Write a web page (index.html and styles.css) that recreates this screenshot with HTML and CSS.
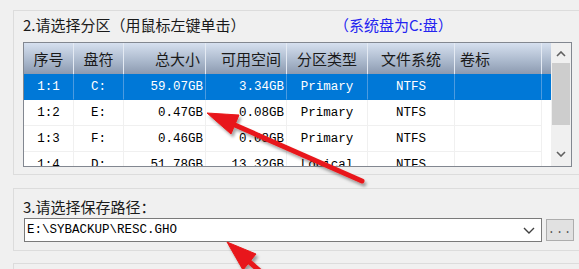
FILE: index.html
```html
<!DOCTYPE html>
<html lang="zh-CN">
<head>
    <meta charset="UTF-8">
    <meta name="viewport" content="width=device-width, initial-scale=1.0">
    <title>一键备份 - 选择分区</title>
    <link rel="stylesheet" href="styles.css">
</head>
<body>

<div class="page">
    <!-- 分区列表 -->
    <section class="group group-part">
        <div class="group-title">
            <span>2.请选择分区（用鼠标左键单击）</span>
            <span class="sys-note">（系统盘为C:盘）</span>
        </div>

        <div class="listview">
            <div class="list-main">
                <div class="row head">
                    <div class="c">序号</div>
                    <div class="c">盘符</div>
                    <div class="r">总大小</div>
                    <div class="r">可用空间</div>
                    <div class="c">分区类型</div>
                    <div class="c">文件系统</div>
                    <div class="l">卷标</div>
                    <div class="fill"></div>
                </div>

                <div class="row sel">
                    <div class="c">1:1</div>
                    <div class="c">C:</div>
                    <div class="r">59.07GB</div>
                    <div class="r">3.34GB</div>
                    <div class="c">Primary</div>
                    <div class="c">NTFS</div>
                    <div class="l"></div>
                </div>
                <div class="row">
                    <div class="c">1:2</div>
                    <div class="c">E:</div>
                    <div class="r">0.47GB</div>
                    <div class="r">0.08GB</div>
                    <div class="c">Primary</div>
                    <div class="c">NTFS</div>
                    <div class="l"></div>
                </div>
                <div class="row">
                    <div class="c">1:3</div>
                    <div class="c">F:</div>
                    <div class="r">0.46GB</div>
                    <div class="r">0.08GB</div>
                    <div class="c">Primary</div>
                    <div class="c">NTFS</div>
                    <div class="l"></div>
                </div>
                <div class="row">
                    <div class="c">1:4</div>
                    <div class="c">D:</div>
                    <div class="r">51.78GB</div>
                    <div class="r">13.32GB</div>
                    <div class="c">Logical</div>
                    <div class="c">NTFS</div>
                    <div class="l"></div>
                </div>
            </div>

            <div class="vscroll">
                <svg class="sb-arrow" width="10" height="6" viewBox="0 0 10 6"><path d="M1 5 L5 1 L9 5" fill="none" stroke="#606060" stroke-width="1.6"/></svg>
                <div class="thumb"></div>
                <svg class="sb-arrow down" width="10" height="6" viewBox="0 0 10 6"><path d="M1 1 L5 5 L9 1" fill="none" stroke="#606060" stroke-width="1.6"/></svg>
            </div>
        </div>
    </section>

    <!-- 保存路径 -->
    <section class="group group-path">
        <div class="group-title">
            <span>3.请选择保存路径：</span>
        </div>
        <div class="path-line">
            <div class="combo">
                <span class="combo-text">E:\SYBACKUP\RESC.GHO</span>
                <svg width="12" height="7" viewBox="0 0 12 7"><path d="M1 1 L6 6 L11 1" fill="none" stroke="#404040" stroke-width="1.4"/></svg>
            </div>
            <button class="browse">...</button>
        </div>
    </section>

    <section class="group group-next"></section>
</div>

<!-- 标注箭头 -->
<svg class="marks" width="579" height="269" viewBox="0 0 579 269">
    <defs>
        <filter id="shade" x="-20%" y="-20%" width="140%" height="140%">
            <feDropShadow dx="2" dy="3" stdDeviation="1.6" flood-color="#000" flood-opacity="0.35"/>
        </filter>
    </defs>
    <g filter="url(#shade)" fill="#e8191a" stroke="#e8191a">
        <line x1="362" y1="181" x2="228" y2="122" stroke-width="5" stroke-linecap="round"/>
        <polygon points="207,113 239,115 231,134" stroke-width="1" stroke-linejoin="round"/>
        <line x1="300" y1="306" x2="246" y2="259" stroke-width="5"/>
        <polygon points="227,242 256,254 243,270" stroke-width="1" stroke-linejoin="round"/>
    </g>
</svg>

</body>
</html>
```

FILE: styles.css
```css
* {
    margin: 0;
    padding: 0;
    box-sizing: border-box;
}

body {
    background-color: #f0f0f0;
    font-family: "Noto Sans CJK SC", "Noto Sans", sans-serif;
    font-size: 15px;
    color: #1a1a1a;
    overflow: hidden;
    width: 579px;
    height: 269px;
    position: relative;
}

.page {
    padding: 10px 0 0 13px;
}

.group {
    width: 600px;
    border: 1px solid #dcdcdc;
    padding-left: 9px;
}

.group-part {
    height: 165px;
}

.group-path {
    height: 63px;
    margin-top: 13px;
}

.group-next {
    height: 40px;
    margin-top: 12px;
}

.group-title {
    display: grid;
    grid-template-columns: 311px auto;
    line-height: 20px;
    padding-top: 4px;
    margin-bottom: 7px;
}

.group-path .group-title {
    padding-top: 8px;
    margin-bottom: 1px;
}

.sys-note {
    color: #2424f0;
}

/* 列表 */
.listview {
    width: 549px;
    height: 125px;
    border: 1px solid #828790;
    background-color: #fff;
    display: flex;
    overflow: hidden;
}

.list-main {
    width: 527px;
}

.row {
    display: grid;
    grid-template-columns: 50px 50px 82px 81px 81px 87px 87px;
    height: 26px;
    align-items: center;
    font-family: "Liberation Mono", "DejaVu Sans Mono", monospace;
    font-size: 12.5px;
    color: #000;
}

.row > div {
    height: 100%;
    display: flex;
    align-items: center;
    border-right: 1px solid #f0f0f0;
    border-bottom: 1px solid #f0f0f0;
    white-space: nowrap;
}

.row .c { justify-content: center; }
.row .r { justify-content: flex-end; padding-right: 2px; }
.row .l { justify-content: flex-start; padding-left: 5px; }

.row.head {
    grid-template-columns: 50px 50px 82px 81px 81px 87px 87px 1fr;
    height: 31px;
    font-family: "Noto Sans CJK SC", sans-serif;
    font-size: 15px;
    color: #1a1a1a;
    background: linear-gradient(#d6e0ef, #a9b7cb 60%, #8c9ab0);
}

.row.head > div {
    border-right: 1px solid #e4eaf3;
    border-bottom: none;
}

.row.head .r {
    padding-right: 5px;
}

.row.head .fill {
    border-right: none;
}

.row.sel {
    background-color: #0078d7;
    color: #fff;
}

.row.sel > div {
    border-right-color: #4c9be0;
    border-bottom-color: #0078d7;
}

/* 滚动条 */
.vscroll {
    width: 20px;
    background-color: #f0f0f0;
    display: flex;
    flex-direction: column;
    align-items: center;
}

.sb-arrow {
    margin-top: 8px;
    height: 6px;
    flex: none;
}

.sb-arrow.down {
    margin-top: 26px;
}

.thumb {
    width: 18px;
    height: 62px;
    margin-top: 6px;
    background-color: #cdcdcd;
}

/* 保存路径 */
.path-line {
    display: flex;
    align-items: center;
    padding-left: 1px;
}

.combo {
    width: 518px;
    height: 24px;
    border: 1px solid #7a7a7a;
    background-color: #fff;
    display: flex;
    align-items: center;
    justify-content: space-between;
    padding: 0 6px 0 2px;
}

.combo-text {
    font-family: "Liberation Mono", "DejaVu Sans Mono", monospace;
    font-size: 12.5px;
    color: #000;
}

.browse {
    width: 28px;
    height: 22px;
    margin-left: 4px;
    border: 1px solid #adadad;
    background-color: #e1e1e1;
    color: #555;
    font-family: "Liberation Mono", monospace;
    font-size: 12px;
    letter-spacing: 1px;
}

.marks {
    position: absolute;
    left: 0;
    top: 0;
    pointer-events: none;
}
```
